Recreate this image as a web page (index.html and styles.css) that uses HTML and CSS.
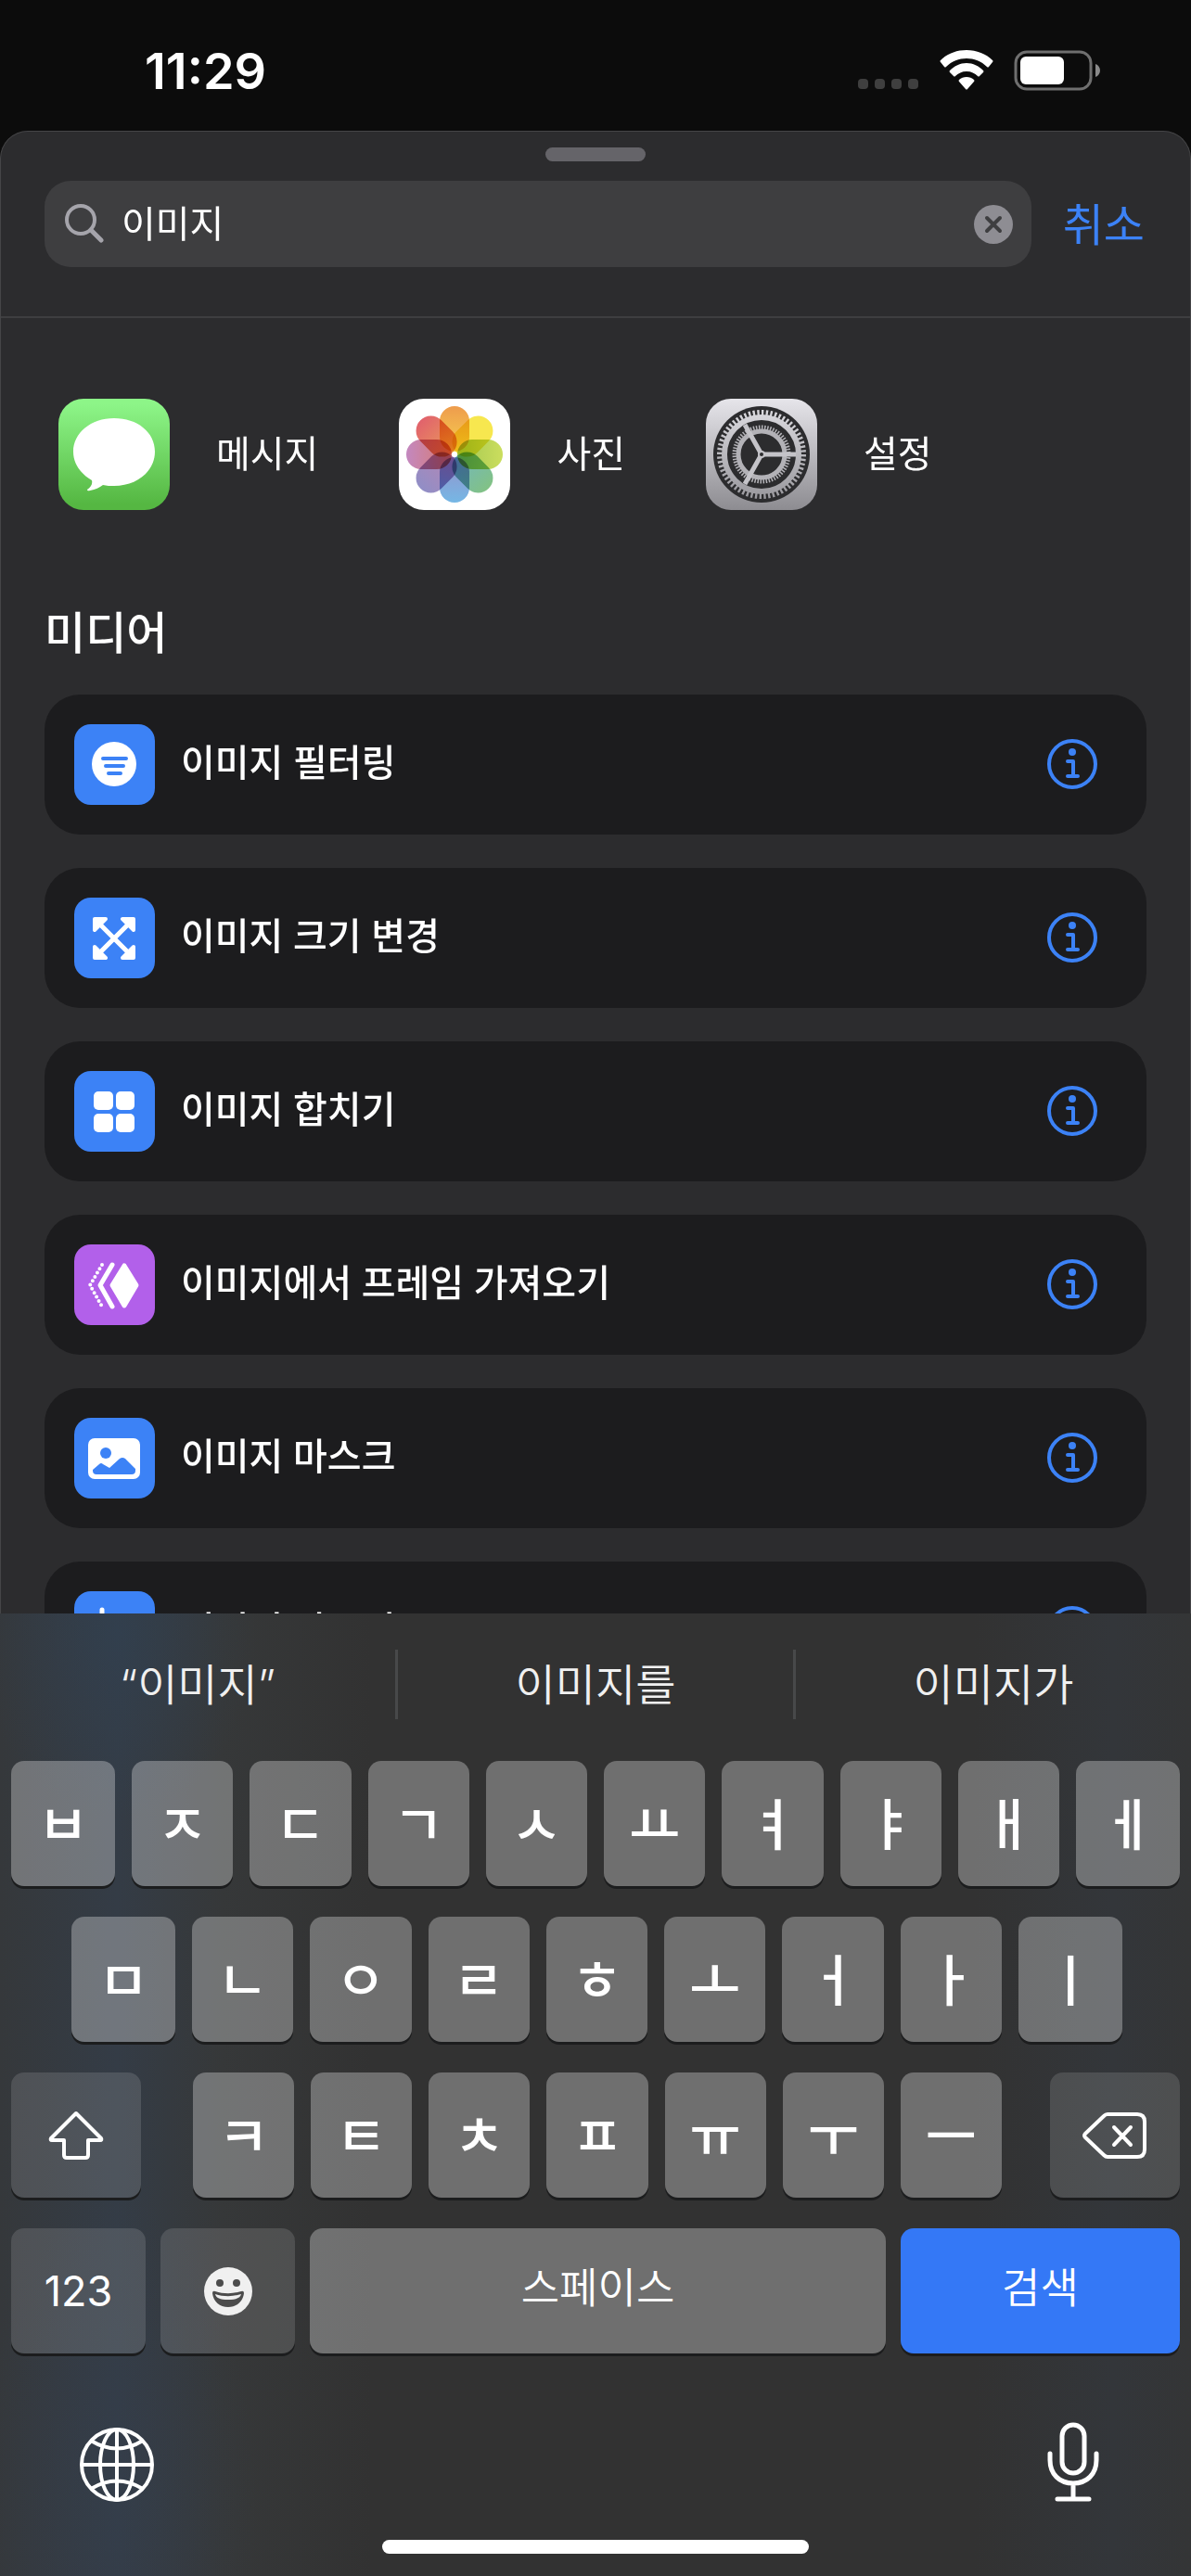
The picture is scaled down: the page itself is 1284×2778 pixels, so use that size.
FILE: index.html
```html
<!DOCTYPE html>
<html lang="ko">
<head>
    <meta charset="UTF-8">
    <meta name="viewport" content="width=device-width, initial-scale=1.0">
    <title>이미지</title>
    <link rel="stylesheet" href="styles.css">
</head>
<body>
    <header class="status-bar">
        <span class="time">11:29</span>
        <div class="status-icons">
            <svg width="66" height="44" viewBox="0 0 66 44" fill="#3f3f3f">
                <rect x="0" y="31" width="11" height="11" rx="4"/>
                <rect x="18" y="31" width="11" height="11" rx="4"/>
                <rect x="36" y="31" width="11" height="11" rx="4"/>
                <rect x="54" y="31" width="11" height="11" rx="4"/>
            </svg>
            <svg width="58" height="44" viewBox="0 0 58 44" fill="#fff">
                <path d="M29 0C18 0 8 4 1 11q-1 1 0 2l4 5q1 1 2 0C13 12 21 9 29 9s16 3 22 9q1 1 2 0l4-5q1-1 0-2C50 4 40 0 29 0z"/>
                <path d="M29 14c-7 0-13 3-18 8q-1 1 0 2l4 4q1 1 2 0c3-3 7-5 12-5s9 2 12 5q1 1 2 0l4-4q1-1 0-2c-5-5-11-8-18-8z"/>
                <path d="M29 29c-3 0-6 1-8 3q-1 1 0 2l7 8q1 1 2 0l7-8q1-1 0-2c-2-2-5-3-8-3z"/>
            </svg>
            <svg width="94" height="44" viewBox="0 0 94 44">
                <rect x="2" y="2" width="81" height="40" rx="12" fill="none" stroke="#6f6f6f" stroke-width="3"/>
                <rect x="7" y="7" width="47" height="30" rx="6" fill="#fff"/>
                <path d="M88 15c3 1 5 4 5 7s-2 6-5 7z" fill="#8a8a8a"/>
            </svg>
        </div>
    </header>

    <main class="sheet">
        <div class="grabber"></div>
        <form class="search-row">
            <div class="search-box">
                <svg width="43" height="43" viewBox="0 0 43 43" fill="none" stroke="#a5a4ab" stroke-linecap="round">
                    <circle cx="17" cy="17" r="15" stroke-width="4"/>
                    <path d="M28 28L39 39" stroke-width="5"/>
                </svg>
                <input type="text" class="search-input" value="이미지" aria-label="검색">
                <button type="button" class="clear" aria-label="지우기">
                    <svg width="42" height="42" viewBox="0 0 42 42">
                        <circle cx="21" cy="21" r="21" fill="#8e8d93"/>
                        <path d="M14 14L28 28M28 14L14 28" stroke="#3e3e40" stroke-width="4" stroke-linecap="round"/>
                    </svg>
                </button>
            </div>
            <button type="button" class="cancel">취소</button>
        </form>

        <nav class="apps">
            <a href="#" class="app">
                <svg width="120" height="120" viewBox="0 0 120 120">
                    <linearGradient id="green" x2="0" y2="1"><stop offset="0.05" stop-color="#8df588"/><stop offset="0.95" stop-color="#55b742"/></linearGradient>
                    <rect width="120" height="120" rx="27" fill="url(#green)"/>
                    <path d="M60 21C35 21 16 37 16 57c0 13 8 24 20 31 1 4-1 7-5 10q0 2 3 1c6-1 10-3 14-6 4 1 8 1 12 1 25 0 44-16 44-37S85 21 60 21z" fill="#fff"/>
                </svg>
                <span>메시지</span>
            </a>
            <a href="#" class="app">
                <svg width="120" height="120" viewBox="0 0 120 120">
                    <linearGradient id="p1" x2="0" y2="1"><stop stop-color="#ee9c4d"/><stop offset="1" stop-color="#f6d04f"/></linearGradient>
                    <linearGradient id="p3" x2="0" y2="1"><stop stop-color="#cbde5e"/><stop offset="1" stop-color="#a2c650"/></linearGradient>
                    <linearGradient id="p4" x2="0" y2="1"><stop stop-color="#82c285"/><stop offset="1" stop-color="#72b6c0"/></linearGradient>
                    <linearGradient id="p5" x2="0" y2="1"><stop stop-color="#75b7e5"/><stop offset="1" stop-color="#9791ca"/></linearGradient>
                    <linearGradient id="p6" x2="0" y2="1"><stop stop-color="#918ec6"/><stop offset="1" stop-color="#b686b4"/></linearGradient>
                    <linearGradient id="p7" x2="0" y2="1"><stop stop-color="#c388c0"/><stop offset="1" stop-color="#da7a6c"/></linearGradient>
                    <linearGradient id="p8" x2="0" y2="1"><stop stop-color="#e1626c"/><stop offset="1" stop-color="#ea9c5a"/></linearGradient>
                    <rect width="120" height="120" rx="27" fill="#fff"/>
                    <g class="petals">
                        <rect x="44" y="8" width="32" height="49" rx="16" fill="url(#p1)"/>
                        <rect x="44" y="8" width="32" height="49" rx="16" fill="#f7e74f" transform="rotate(45 60 60)"/>
                        <rect x="44" y="8" width="32" height="49" rx="16" fill="url(#p3)" transform="rotate(90 60 60)"/>
                        <rect x="44" y="8" width="32" height="49" rx="16" fill="url(#p4)" transform="rotate(135 60 60)"/>
                        <rect x="44" y="8" width="32" height="49" rx="16" fill="url(#p5)" transform="rotate(180 60 60)"/>
                        <rect x="44" y="8" width="32" height="49" rx="16" fill="url(#p6)" transform="rotate(225 60 60)"/>
                        <rect x="44" y="8" width="32" height="49" rx="16" fill="url(#p7)" transform="rotate(270 60 60)"/>
                        <rect x="44" y="8" width="32" height="49" rx="16" fill="url(#p8)" transform="rotate(315 60 60)"/>
                    </g>
                </svg>
                <span>사진</span>
            </a>
            <a href="#" class="app">
                <svg width="120" height="120" viewBox="0 0 120 120">
                    <linearGradient id="grey" x2="0" y2="1"><stop stop-color="#e6e5ea"/><stop offset="1" stop-color="#8d8c91"/></linearGradient>
                    <linearGradient id="ring" gradientUnits="userSpaceOnUse" x1="0" y1="8" x2="0" y2="112"><stop stop-color="#dddce1"/><stop offset="1" stop-color="#97969b"/></linearGradient>
                    <rect width="120" height="120" rx="27" fill="url(#grey)"/>
                    <circle cx="60" cy="60" r="52" fill="#2c2c2e"/>
                    <g fill="none" stroke="url(#ring)">
                        <circle cx="60" cy="60" r="45" stroke-width="6" pathLength="120" stroke-dasharray="1 1"/>
                        <circle cx="60" cy="60" r="40" stroke-width="6"/>
                        <g stroke="#b3b2b7">
                            <circle cx="60" cy="60" r="29" stroke-width="5" pathLength="120" stroke-dasharray="1 1"/>
                            <circle cx="60" cy="60" r="25" stroke-width="5"/>
                        </g>
                        <g stroke="#c4c3c8" stroke-width="5">
                            <path d="M60 60H97M60 60L42 28M60 60L42 92"/>
                        </g>
                    </g>
                    <circle cx="60" cy="60" r="4" fill="#c4c3c8"/>
                    <circle cx="60" cy="60" r="2" fill="#2c2c2e"/>
                </svg>
                <span>설정</span>
            </a>
        </nav>

        <h2 class="section-title">미디어</h2>
        <ul class="actions">
            <li class="action">
                <svg class="tile" viewBox="0 0 87 87">
                    <circle cx="43" cy="43" r="24" fill="#fff"/>
                    <path d="M31 37H56M34 45H53M37 53H50" stroke="#3c82f6" stroke-width="4" stroke-linecap="round"/>
                </svg>
                <span class="action-name">이미지 필터링</span>
                <button class="info" aria-label="정보"><svg viewBox="0 0 54 54"><use href="#info-icon"/></svg></button>
            </li>
            <li class="action">
                <svg class="tile" viewBox="0 0 87 87">
                    <g fill="#fff" stroke="#fff" stroke-linejoin="round" stroke-linecap="round">
                        <path d="M27 28L59 60M59 28L27 60" stroke-width="5"/>
                        <path d="M22 23H34L22 35zM64 23V35L52 23zM22 65V53L34 65zM64 65H52L64 53z" stroke-width="4"/>
                    </g>
                </svg>
                <span class="action-name">이미지 크기 변경</span>
                <button class="info" aria-label="정보"><svg viewBox="0 0 54 54"><use href="#info-icon"/></svg></button>
            </li>
            <li class="action">
                <svg class="tile" viewBox="0 0 87 87" fill="#fff">
                    <rect x="21" y="22" width="21" height="20" rx="5"/>
                    <rect x="45" y="22" width="20" height="20" rx="5"/>
                    <rect x="21" y="46" width="21" height="20" rx="5"/>
                    <rect x="45" y="46" width="20" height="20" rx="5"/>
                </svg>
                <span class="action-name">이미지 합치기</span>
                <button class="info" aria-label="정보"><svg viewBox="0 0 54 54"><use href="#info-icon"/></svg></button>
            </li>
            <li class="action">
                <svg class="tile purple" viewBox="0 0 87 87" fill="none" stroke="#fff" stroke-linecap="round" stroke-linejoin="round">
                    <path d="M54 23L67 44L54 66L41 44z" fill="#fff" stroke-width="5"/>
                    <path d="M41 22L28 44L41 67" stroke-width="5"/>
                    <path d="M30 22L17 44L30 67" stroke-width="4" stroke-dasharray="0 5"/>
                </svg>
                <span class="action-name">이미지에서 프레임 가져오기</span>
                <button class="info" aria-label="정보"><svg viewBox="0 0 54 54"><use href="#info-icon"/></svg></button>
            </li>
            <li class="action">
                <svg class="tile" viewBox="0 0 87 87">
                    <rect x="15" y="22" width="56" height="44" rx="7" fill="#fff"/>
                    <circle cx="34" cy="38" r="6" fill="#3c82f6"/>
                    <path d="M20 56L27 50q2-2 4 0l7 4 11-10q3-2 6 0L66 55v2q0 4-4 4H24q-4 0-4-4z" fill="#3c82f6"/>
                </svg>
                <span class="action-name">이미지 마스크</span>
                <button class="info" aria-label="정보"><svg viewBox="0 0 54 54"><use href="#info-icon"/></svg></button>
            </li>
            <li class="action">
                <svg class="tile" viewBox="0 0 87 87" fill="none" stroke="#fff" stroke-width="5" stroke-linecap="round" stroke-linejoin="round">
                    <path d="M30 20V58H68M20 31H57V68"/>
                </svg>
                <span class="action-name">이미지 자르기</span>
                <button class="info" aria-label="정보"><svg viewBox="0 0 54 54"><use href="#info-icon"/></svg></button>
            </li>
        </ul>
    </main>

    <section class="keyboard">
        <div class="suggestions">
            <button>“이미지”</button>
            <button>이미지를</button>
            <button>이미지가</button>
        </div>
        <div class="keys">
            <div class="key-row top">
                <button>ㅂ</button><button>ㅈ</button><button>ㄷ</button><button>ㄱ</button><button>ㅅ</button><button>ㅛ</button><button>ㅕ</button><button>ㅑ</button><button>ㅐ</button><button>ㅔ</button>
            </div>
            <div class="key-row middle">
                <button>ㅁ</button><button>ㄴ</button><button>ㅇ</button><button>ㄹ</button><button>ㅎ</button><button>ㅗ</button><button>ㅓ</button><button>ㅏ</button><button>ㅣ</button>
            </div>
            <div class="key-row">
                <button class="dark shift" aria-label="시프트">
                    <svg width="62" height="56" viewBox="0 0 62 56" fill="none" stroke="#fff" stroke-width="4" stroke-linejoin="round">
                        <path d="M31 4L4 31q-1 2 1 2H18V49q0 3 3 3H41q3 0 3-3V33H57q2 0 1-2z"/>
                    </svg>
                </button>
                <div class="letters">
                    <button>ㅋ</button><button>ㅌ</button><button>ㅊ</button><button>ㅍ</button><button>ㅠ</button><button>ㅜ</button><button>ㅡ</button>
                </div>
                <button class="dark shift" aria-label="삭제">
                    <svg width="70" height="52" viewBox="0 0 70 52" fill="none" stroke="#fff" stroke-width="4" stroke-linejoin="round" stroke-linecap="round">
                        <path d="M27 3H59q8 0 8 8V41q0 8-8 8H27q-2 0-4-2L3 28q-2-2 0-4L23 5q2-2 4-2z"/>
                        <path d="M34 17L52 36M52 17L34 36"/>
                    </svg>
                </button>
            </div>
            <div class="key-row bottom">
                <button class="dark num">123</button>
                <button class="dark num" aria-label="이모티콘">
                    <svg width="52" height="52" viewBox="0 0 52 52">
                        <circle cx="26" cy="26" r="26" fill="#f0f0f0"/>
                        <g fill="#4c4c4c">
                            <circle cx="17" cy="17" r="4"/>
                            <circle cx="35" cy="17" r="4"/>
                            <path d="M12 26q-3-1-3 2c1 9 8 15 17 15s16-6 17-15q0-3-3-2c-9 3-19 3-28 0z"/>
                        </g>
                        <path d="M12 29c9 3 19 3 28 0-1 4-5 6-14 6s-13-2-14-6z" fill="#f0f0f0"/>
                    </svg>
                </button>
                <button class="space">스페이스</button>
                <button class="search-key">검색</button>
            </div>
        </div>
        <div class="dock">
            <button aria-label="다음 키보드">
                <svg width="82" height="88" viewBox="0 0 82 88" fill="none" stroke="#fff" stroke-width="4">
                    <circle cx="41" cy="48" r="38"/>
                    <ellipse cx="41" cy="48" rx="18" ry="38"/>
                    <path d="M41 10V86M3 48H79M13 22Q41 39 69 22M13 74Q41 57 69 74"/>
                </svg>
            </button>
            <button aria-label="받아쓰기">
                <svg width="60" height="88" viewBox="0 0 60 88" fill="none" stroke="#fff" stroke-width="5" stroke-linecap="round">
                    <rect x="18" y="5" width="24" height="52" rx="12"/>
                    <path d="M5 36V43C5 58 15 68 30 68S55 58 55 43V36M30 68V84M13 85H47"/>
                </svg>
            </button>
        </div>
        <div class="home-bar"></div>
    </section>

    <!-- shared info icon -->
    <svg class="defs">
        <symbol id="info-icon" viewBox="0 0 54 54">
            <g fill="none" stroke="#3c82f6" stroke-width="4" stroke-linecap="round" stroke-linejoin="round">
                <circle cx="27" cy="27" r="25"/>
                <path d="M22 24H28V40M22 40H33"/>
            </g>
            <circle cx="27" cy="14" r="4" fill="#3c82f6"/>
        </symbol>
    </svg>
</body>
</html>
```
FILE: styles.css
```css
* {
    box-sizing: border-box;
}

body {
    margin: 0;
    height: 100vh;
    display: flex;
    flex-direction: column;
    background-color: #0c0c0c;
    color: white;
    font-family: Inter, "Noto Sans CJK KR", sans-serif;
    font-size: 40px;
    overflow: hidden;
}

button {
    padding: 0;
    border: none;
    background: none;
    color: inherit;
    font: inherit;
    cursor: pointer;
}

svg {
    display: block;
    flex: none;
}

.defs {
    position: absolute;
    width: 0;
    height: 0;
}

.status-bar {
    height: 141px;
    padding: 10px 97px 0 156px;
    display: flex;
    align-items: center;
    justify-content: space-between;
}

.time {
    padding-top: 2px;
    font-size: 54px;
    font-weight: 600;
}

.status-icons {
    display: flex;
    gap: 22px;
}

.sheet {
    flex: 1;
    min-height: 0;
    overflow: hidden;
    background-color: #2c2c2e;
    border: 1px solid #454547;
    border-bottom: none;
    border-radius: 30px 30px 0 0;
}

.grabber {
    width: 108px;
    height: 15px;
    margin: 17px auto 21px;
    border-radius: 8px;
    background-color: #656469;
}

.search-row {
    display: flex;
    align-items: center;
    gap: 34px;
    height: 148px;
    padding: 0 49px 53px 47px;
    border-bottom: 2px solid #3e3e40;
}

.search-box {
    flex: 1;
    height: 93px;
    display: flex;
    align-items: center;
    gap: 18px;
    padding: 0 20px 0 22px;
    border-radius: 28px;
    background-color: #3e3e40;
}

.search-input {
    flex: 1;
    min-width: 0;
    padding: 0 0 6px;
    border: none;
    outline: none;
    background: none;
    color: white;
    font: inherit;
}

.cancel {
    padding-bottom: 6px;
    color: #3c82f6;
    font-size: 48px;
}

.apps {
    display: flex;
    gap: 87px;
    padding: 87px 62px 0;
}

.app {
    display: flex;
    align-items: center;
    gap: 50px;
    color: white;
    text-decoration: none;
}

.app span {
    padding-bottom: 6px;
}

.petals {
    isolation: isolate;
}

.petals rect {
    mix-blend-mode: multiply;
}

.section-title {
    margin: 95px 47px 29px;
    font-size: 48px;
    font-weight: 500;
    line-height: 75px;
}

.actions {
    margin: 0;
    padding: 0 47px;
    list-style: none;
    display: flex;
    flex-direction: column;
    gap: 36px;
}

.action {
    height: 151px;
    display: flex;
    align-items: center;
    padding: 0 53px 1px 32px;
    border-radius: 38px;
    background-color: #1c1c1e;
    font-weight: 500;
}

.tile {
    width: 87px;
    height: 87px;
    border-radius: 18px;
    background-color: #3c82f6;
}

.purple {
    background-color: #b260ea;
}

.action-name {
    flex: 1;
    margin-left: 28px;
    padding-bottom: 8px;
}

.info svg {
    width: 54px;
    height: 54px;
}

.keyboard {
    background:
        radial-gradient(ellipse 150px 200px at 126px 20px, #30425580 0%, transparent 100%),
        radial-gradient(ellipse 150px 330px at 126px 960px, #343f4e80 0%, transparent 100%),
        linear-gradient(to right, #35383b 0, #343c46 126px, #363839 240px, #323232 400px, #323232 1050px, #33363a 1200px, #343536 100%);
}

.suggestions {
    height: 159px;
    padding: 39px 0 45px;
    display: flex;
    font-size: 47px;
    font-weight: 350;
    color: #f0f0f0;
}

.suggestions button {
    flex: 1;
    padding-bottom: 6px;
}

.suggestions button + button {
    border-left: 3px solid #48494a;
}

.keys {
    display: flex;
    flex-direction: column;
    gap: 33px;
    padding: 0 12px;
}

.key-row {
    display: flex;
    justify-content: space-between;
    gap: 18px;
}

.key-row button {
    flex: 1;
    height: 135px;
    display: flex;
    align-items: center;
    justify-content: center;
    padding-bottom: 6px;
    border-radius: 14px;
    background-color: rgba(255, 255, 255, 0.3);
    box-shadow: 0 3px 0 #1c1d1e;
    font-size: 60px;
    font-weight: 500;
}

.top button:first-child,
.top button:last-child,
.middle button:first-child,
.middle button:last-child {
    flex: 0 0 112px;
}

.middle {
    padding: 0 62px 0 65px;
}

.letters {
    flex: 1;
    display: flex;
    gap: 18px;
    padding: 0 34px 0 38px;
}

.key-row .dark {
    padding: 0;
    background-color: rgba(255, 255, 255, 0.13);
}

.key-row .shift {
    flex: 0 0 140px;
}

.key-row .num {
    flex: 0 0 145px;
    font-size: 45px;
    font-weight: 400;
}

.bottom {
    gap: 16px;
}

.key-row .space,
.key-row .search-key {
    padding-bottom: 12px;
    font-size: 45px;
    font-weight: 350;
}

.key-row .search-key {
    flex: 0 0 301px;
    background-color: #3478f6;
}

.dock {
    display: flex;
    justify-content: space-between;
    padding: 72px 97px 0 85px;
}

.home-bar {
    width: 460px;
    height: 15px;
    margin: 41px auto 24px;
    border-radius: 8px;
    background-color: white;
}
```
